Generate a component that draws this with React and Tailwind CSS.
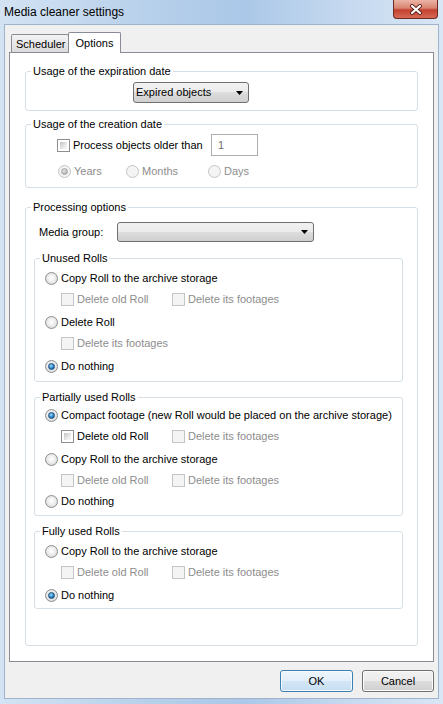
import React from 'react';

// Win7-style "Media cleaner settings" dialog

function Radio({ checked = false, disabled = false }) {
  const ring = disabled
    ? 'border-[#c5c5c5] bg-[#f4f4f4]'
    : 'border-[#8e8f8f] bg-[radial-gradient(circle_at_50%_45%,#fdfdfd_10%,#e8e8e8_55%,#c6c6c6_100%)]';
  const dot = disabled
    ? 'border-[#a9a9a9] bg-[radial-gradient(circle_at_40%_35%,#e6e6e6,#9f9f9f)]'
    : 'border-[#1b4f7c] bg-[radial-gradient(circle_at_40%_35%,#a6dcf8,#2a86c9_55%,#0f4e86)]';
  return (
    <span className={`w-[13px] h-[13px] rounded-full border ${ring} flex items-center justify-center shrink-0`}>
      {checked && <span className={`w-[7px] h-[7px] rounded-full border ${dot}`} />}
    </span>
  );
}

function Check({ disabled = false }) {
  if (disabled) {
    return <span className="w-[13px] h-[13px] border border-[#c5c5c5] bg-[#f4f4f4] shrink-0" />;
  }
  return (
    <span className="w-[13px] h-[13px] border border-[#8e8f8f] bg-white p-[2px] flex shrink-0">
      <span className="flex-1 bg-[linear-gradient(135deg,#c4c4c4,#efefef_70%,#f9f9f9)]" />
    </span>
  );
}

function Label({ disabled, children }) {
  return (
    <span className={`leading-[13px] whitespace-nowrap ${disabled ? 'text-[#8d8d8d]' : 'text-black'}`}>{children}</span>
  );
}

function Group({ label, className = '', children }) {
  return (
    <fieldset className={`border border-[#d5dfe5] rounded-[3px] ${className}`}>
      <legend className="ml-[5px] px-[2px] leading-[13px]">{label}</legend>
      {children}
    </fieldset>
  );
}

function Arrow() {
  return (
    <svg width="7" height="4" viewBox="0 0 7 4" className="shrink-0">
      <path d="M0 0 H7 L3.5 4 Z" fill="#000" />
    </svg>
  );
}

function RadioRow({ className = '', checked, children }) {
  return (
    <div className={`h-[20px] flex items-center gap-[3px] pl-[10px] ${className}`}>
      <Radio checked={checked} />
      <Label>{children}</Label>
    </div>
  );
}

function CheckRow({ className = '', oldEnabled = false, single = false }) {
  return (
    <div className={`h-[20px] flex items-center pl-[26px] ${className}`}>
      {single ? (
        <div className="flex items-center gap-[3px]">
          <Check disabled />
          <Label disabled>Delete its footages</Label>
        </div>
      ) : (
        <>
          <div className="w-[111px] flex items-center gap-[3px]">
            <Check disabled={!oldEnabled} />
            <Label disabled={!oldEnabled}>Delete old Roll</Label>
          </div>
          <div className="flex items-center gap-[3px]">
            <Check disabled />
            <Label disabled>Delete its footages</Label>
          </div>
        </>
      )}
    </div>
  );
}

export default function App() {
  return (
    <div className="w-[443px] h-[704px] flex flex-col overflow-hidden bg-[linear-gradient(90deg,#d3e3f4,#b6cfea_35%,#abc8e8_55%,#c7daf0_80%,#d8e6f5)] font-['Liberation_Sans',Arial,sans-serif] text-[11px] text-black select-none">
      {/* Title bar */}
      <div className="h-[24px] flex items-start shrink-0">
        <span className="pl-[4px] pt-[4px] text-[12px] leading-[16px]">Media cleaner settings</span>
        <div className="ml-auto mr-[5px] w-[45px] h-[19px] rounded-b-[4px] border border-t-0 border-[#6e2a22] bg-[linear-gradient(180deg,#ebb4a6,#d98371_45%,#c3412f_55%,#d56a55)] flex items-center justify-center">
          <svg width="14" height="11" viewBox="0 0 14 11">
            <path d="M3 2 L11 9 M11 2 L3 9" stroke="#5b2219" strokeWidth="4" strokeLinecap="round" />
            <path d="M3 2 L11 9 M11 2 L3 9" stroke="#ffffff" strokeWidth="2.2" strokeLinecap="round" />
          </svg>
        </div>
      </div>

      {/* Client area */}
      <div className="flex-1 mx-[4px] mb-[5px] bg-[#f0f0f0] border border-[#9fb3cb] flex flex-col px-[4px] pt-[7px]">
        {/* Tabs */}
        <div className="h-[20px] flex items-end pl-[2px] shrink-0">
          <div className="w-[58px] h-[18px] border border-b-0 border-[#898c95] bg-[linear-gradient(180deg,#f3f3f3,#e8e8e8_50%,#dadada)] flex items-center pl-[4px] pt-[1px] rounded-t-[2px]">
            Scheduler
          </div>
          <div className="relative z-10 -ml-[1px] -mb-[1px] w-[53px] h-[21px] border border-b-0 border-[#898c95] bg-white flex items-center justify-center rounded-t-[2px]">
            Options
          </div>
        </div>

        {/* Panel */}
        <div className="h-[610px] border border-[#898c95] bg-white flex flex-col px-[15px] shrink-0">
          <Group label="Usage of the expiration date" className="mt-[12px] pt-[4px] pb-[7px]">
            <div className="ml-[107px] w-[116px] h-[21px] border border-[#707070] rounded-[3px] bg-[linear-gradient(180deg,#f2f2f2,#ebebeb_50%,#dddddd_50%,#cfcfcf)] flex items-center pl-[2px] pr-[5px]">
              <span className="flex-1 leading-[13px]">Expired objects</span>
              <Arrow />
            </div>
          </Group>

          <Group label="Usage of the creation date" className="mt-[7px] pt-[3px] pb-[6px]">
            <div className="h-[22px] flex items-center pl-[31px]">
              <div className="w-[154px] flex items-center gap-[3px]">
                <Check />
                <Label>Process objects older than</Label>
              </div>
              <div className="w-[47px] h-[22px] border border-[#abadb3] bg-white flex items-center pl-[6px] text-[#6d6d6d]">1</div>
            </div>
            <div className="mt-[5px] h-[20px] flex items-center pl-[32px]">
              <div className="w-[68px] flex items-center gap-[3px]">
                <Radio checked disabled />
                <Label disabled>Years</Label>
              </div>
              <div className="w-[82px] flex items-center gap-[3px]">
                <Radio disabled />
                <Label disabled>Months</Label>
              </div>
              <div className="flex items-center gap-[3px]">
                <Radio disabled />
                <Label disabled>Days</Label>
              </div>
            </div>
          </Group>

          <Group label="Processing options" className="mt-[13px] pt-[8px] pb-[36px]">
            <div className="h-[20px] flex items-center pl-[13px]">
              <span className="w-[78px] leading-[13px]">Media group:</span>
              <div className="w-[197px] h-[20px] border border-[#707070] rounded-[3px] bg-[linear-gradient(180deg,#f2f2f2,#ebebeb_50%,#dddddd_50%,#cfcfcf)] flex items-center justify-end pr-[5px]">
                <Arrow />
              </div>
            </div>

            <Group label="Unused Rolls" className="mt-[10px] ml-[8px] mr-[14px] pt-[3px] pb-[5px]">
              <RadioRow>Copy Roll to the archive storage</RadioRow>
              <CheckRow className="mt-[1px]" />
              <RadioRow className="mt-[3px]">Delete Roll</RadioRow>
              <CheckRow className="mt-[1px]" single />
              <RadioRow className="mt-[3px]" checked>Do nothing</RadioRow>
            </Group>

            <Group label="Partially used Rolls" className="mt-[9px] ml-[8px] mr-[14px] pt-[1px] pb-[4px]">
              <RadioRow checked>Compact footage (new Roll would be placed on the archive storage)</RadioRow>
              <CheckRow className="mt-[1px]" oldEnabled />
              <RadioRow className="mt-[3px]">Copy Roll to the archive storage</RadioRow>
              <CheckRow className="mt-[1px]" />
              <RadioRow className="mt-[1px]">Do nothing</RadioRow>
            </Group>

            <Group label="Fully used Rolls" className="mt-[9px] ml-[8px] mr-[14px] pt-[3px] pb-[3px]">
              <RadioRow>Copy Roll to the archive storage</RadioRow>
              <CheckRow className="mt-[1px]" />
              <RadioRow className="mt-[3px]" checked>Do nothing</RadioRow>
            </Group>
          </Group>
        </div>

        {/* Buttons */}
        <div className="mt-[8px] flex justify-end gap-[9px] shrink-0">
          <button className="w-[73px] h-[22px] border border-[#3c7fb1] rounded-[3px] bg-[linear-gradient(180deg,#eef6fc,#e2eef9_50%,#d3e6f6_50%,#c6def3)] shadow-[inset_0_0_0_1px_#f4faff] leading-[13px]">
            OK
          </button>
          <button className="w-[72px] h-[22px] border border-[#707070] rounded-[3px] bg-[linear-gradient(180deg,#f2f2f2,#ebebeb_50%,#dddddd_50%,#cfcfcf)] shadow-[inset_0_0_0_1px_#fbfbfb] leading-[13px]">
            Cancel
          </button>
        </div>
      </div>
    </div>
  );
}
